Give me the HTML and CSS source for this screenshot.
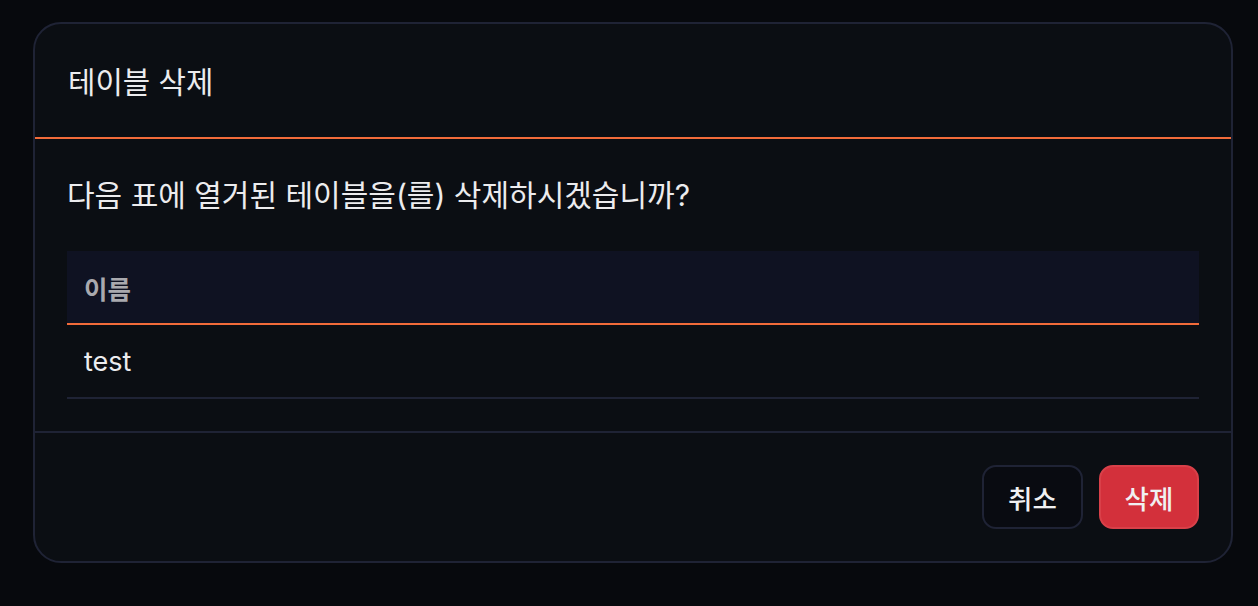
FILE: index.html
```html
<!DOCTYPE html>
<html lang="ko">
<head>
<meta charset="utf-8">
<link rel="stylesheet" href="styles.css">
</head>
<body>
<div class="page">
  <div class="modal">
    <div class="modal-header">
      <h2 class="title">테이블 삭제</h2>
    </div>
    <div class="modal-body">
      <p class="message">다음 표에 열거된 테이블을(를) 삭제하시겠습니까?</p>
      <table class="list">
        <thead>
          <tr><th>이름</th></tr>
        </thead>
        <tbody>
          <tr><td>test</td></tr>
        </tbody>
      </table>
    </div>
    <div class="modal-footer">
      <button class="btn btn-cancel">취소</button>
      <button class="btn btn-danger">삭제</button>
    </div>
  </div>
</div>
</body>
</html>
```
FILE: styles.css
```css
html, body {
  margin: 0;
  padding: 0;
  background: #07090d;
  width: 1258px;
  height: 606px;
  overflow: hidden;
}
body {
  font-family: Inter, "Noto Sans CJK KR", sans-serif;
  color: #ececee;
}
.page {
  padding: 22px 25px 0 33px;
}
.modal {
  width: 1200px;
  height: 541px;
  box-sizing: border-box;
  background: #0b0e13;
  border: 2px solid #1f2335;
  border-radius: 28px;
  display: flex;
  flex-direction: column;
  overflow: hidden;
}
.modal-header {
  height: 113px;
  padding: 0 33px;
  display: flex;
  align-items: center;
  border-bottom: 2px solid #f26b3a;
}
.title {
  margin: 0 0 2px;
  font-size: 29.8px;
  font-weight: 400;
  color: #ececee;
}
.modal-body {
  padding: 32px;
  flex: 1;
  display: flex;
  flex-direction: column;
}
.message {
  margin: 0;
  height: 80px;
  display: flex;
  align-items: center;
  margin-top: -18px;
  margin-bottom: 18px;
  font-size: 30px;
  color: #ececee;
}
.list {
  width: 100%;
  border-collapse: collapse;
}
.list th {
  height: 72px;
  padding: 0 17px;
  background: #0f1222;
  text-align: left;
  font-size: 25.5px;
  font-weight: 700;
  color: #a9a9ae;
  border-bottom: 2px solid #f26b3a;
}
.list td {
  height: 72px;
  padding: 0 17px;
  font-size: 27px;
  color: #ececee;
  border-bottom: 2px solid #1f2335;
}
.modal-footer {
  border-top: 2px solid #1f2335;
  padding: 32px;
  display: flex;
  justify-content: flex-end;
  gap: 16px;
}
.btn {
  height: 64px;
  width: 101px;
  box-sizing: border-box;
  border-radius: 14px;
  font-family: Inter, "Noto Sans CJK KR", sans-serif;
  font-size: 26.5px;
  font-weight: 500;
  color: #f0f0f2;
  cursor: pointer;
}
.btn-cancel {
  background: #090b11;
  border: 2px solid #1f2335;
}
.btn-danger {
  width: 100px;
  background: #d3303b;
  border: 2px solid #d94049;
}
```
